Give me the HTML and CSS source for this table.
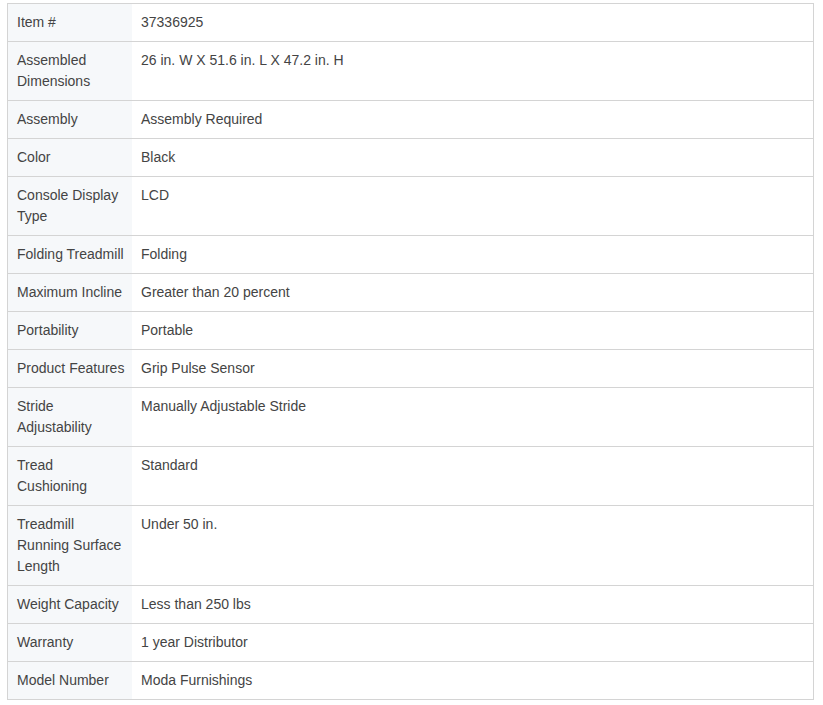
FILE: index.html
```html
<!DOCTYPE html>
<html lang="en">
<head>
    <meta charset="UTF-8">
    <title>Specifications</title>
    <link rel="stylesheet" href="styles.css">
</head>
<body>
    <table class="specs">
        <tbody>
            <tr><th>Item #</th><td>37336925</td></tr>
            <tr><th>Assembled Dimensions</th><td>26 in. W X 51.6 in. L X 47.2 in. H</td></tr>
            <tr><th>Assembly</th><td>Assembly Required</td></tr>
            <tr><th>Color</th><td>Black</td></tr>
            <tr><th>Console Display Type</th><td>LCD</td></tr>
            <tr><th>Folding Treadmill</th><td>Folding</td></tr>
            <tr><th>Maximum Incline</th><td>Greater than 20 percent</td></tr>
            <tr><th>Portability</th><td>Portable</td></tr>
            <tr><th>Product Features</th><td>Grip Pulse Sensor</td></tr>
            <tr><th>Stride Adjustability</th><td>Manually Adjustable Stride</td></tr>
            <tr><th>Tread Cushioning</th><td>Standard</td></tr>
            <tr><th>Treadmill Running Surface Length</th><td>Under 50 in.</td></tr>
            <tr><th>Weight Capacity</th><td>Less than 250 lbs</td></tr>
            <tr><th>Warranty</th><td>1 year Distributor</td></tr>
            <tr><th>Model Number</th><td>Moda Furnishings</td></tr>
        </tbody>
    </table>
</body>
</html>
```

FILE: styles.css
```css
body {
    margin: 0;
    padding: 3px 7px;
    background: #fff;
    font-family: "Liberation Sans", Arial, sans-serif;
    font-size: 14px;
    color: #444;
}
.specs {
    width: 807px;
    border-collapse: collapse;
    border: 1px solid #d4d4d4;
}
.specs tr {
    border-bottom: 1px solid #d4d4d4;
}
.specs th,
.specs td {
    padding: 8px 9px;
    line-height: 21px;
    text-align: left;
    vertical-align: top;
    font-weight: normal;
}
.specs th {
    width: 109px;
    padding-right: 6px;
    background-color: #f6f8fa;
}
```
